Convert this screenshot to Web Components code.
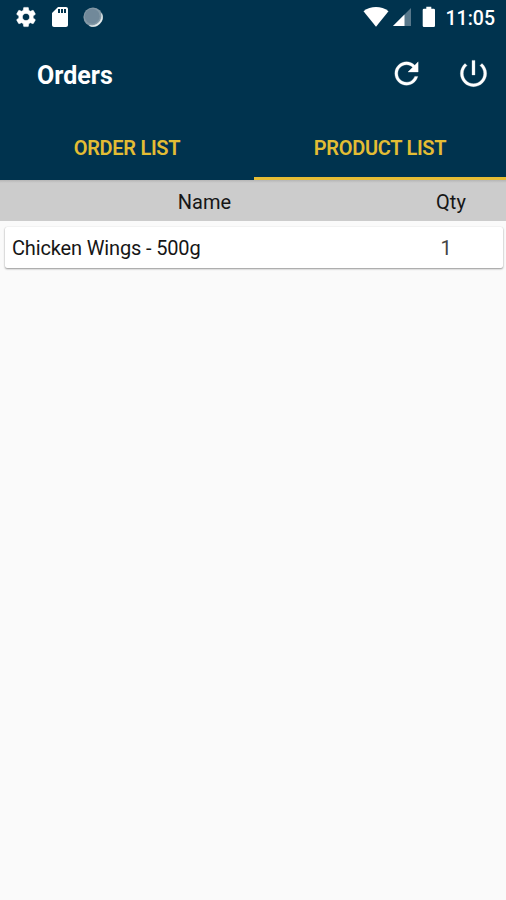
<!DOCTYPE html>
<html lang="en">
<head>
<meta charset="utf-8">
<title>Orders</title>
<style>
html,body{margin:0;height:100%}
body{background:#fafafa;font-family:Roboto,"Liberation Sans",sans-serif;overflow:hidden}
</style>
</head>
<body>
<orders-app></orders-app>
<script>
function define(name, html) {
  const template = document.createElement('template');
  template.innerHTML = html;
  customElements.define(name, class extends HTMLElement {
    constructor() {
      super();
      this.attachShadow({ mode: 'open' }).append(template.content.cloneNode(true));
    }
  });
}

define('status-bar', `
<style>
:host{display:flex;align-items:center;justify-content:space-between;height:36px;padding:0 11px 0 14px;box-sizing:border-box;color:#fff}
div{display:flex;align-items:center}
svg{display:block;fill:#fff}
.left{gap:9.500px;margin-top:-2px}
.right svg{margin-top:-2px}
time{font-size:19.500px;font-weight:500;line-height:36px;margin-left:10px;padding-top:1px}
</style>
<div class="left">
<svg width="24" height="24" viewBox="0 0 24 24"><path stroke="#fff" stroke-width=".5" d="M19.140 12.940c.04-.3.06-.61.06-.94 0-.32-.02-.64-.07-.94l2.030-1.580c.18-.14.23-.41.12-.61l-1.920-3.320c-.12-.22-.37-.29-.59-.22l-2.390.96c-.5-.38-1.030-.7-1.620-.94l-.36-2.540c-.04-.24-.24-.41-.48-.41h-3.840c-.24 0-.43.17-.47.41l-.36 2.540c-.59.24-1.130.57-1.620.94l-2.390-.96c-.22-.08-.47 0-.59.22L2.740 8.870c-.12.21-.08.47.12.61l2.030 1.580c-.05.3-.09.63-.09.94s.02.64.07.94l-2.030 1.580c-.18.14-.23.41-.12.61l1.920 3.320c.12.22.37.29.59.22l2.390-.96c.5.38 1.030.7 1.620.94l.36 2.540c.05.24.24.41.48.41h3.840c.24 0 .44-.17.47-.41l.36-2.540c.59-.24 1.130-.56 1.620-.94l2.390.96c.22.08.47 0 .59-.22l1.920-3.320c.12-.22.07-.47-.12-.61l-2.010-1.580zM12 15.600c-1.980 0-3.600-1.620-3.600-3.600s1.620-3.600 3.600-3.600 3.600 1.620 3.600 3.600-1.620 3.600-3.600 3.600z"/></svg>
<svg width="24" height="24" viewBox="0 0 24 24"><path d="M18 2h-8L4.020 8 4 20c0 1.100.9 2 2 2h12c1.100 0 2-.9 2-2V4c0-1.100-.9-2-2-2zm-6 6h-2V4h2v4zm3 0h-2V4h2v4zm3 0h-2V4h2v4z"/></svg>
<svg width="24" height="24" viewBox="0 0 24 24"><circle cx="12" cy="12" r="9.600" fill="#8499a6"/><circle cx="11.200" cy="11.200" r="7.500" fill="#71899a"/><path d="M20.700 8.500A9.300 9.300 0 0 1 8.500 20.700 10.600 10.600 0 0 0 20.700 8.500Z" fill="#e8eeee" stroke="#e8eeee" stroke-width=".6"/></svg>
</div>
<div class="right">
<svg width="26" height="22" viewBox="0 0 26 22"><path d="M.5 5.200C7.700-.4 18.300-.4 25.500 5.200L13 20.700Z"/></svg>
<svg width="20" height="22" viewBox="0 0 20 22" style="margin-left:3px"><path d="M19 2V20H1Z" fill="#58788b"/><path d="M12.500 8.500V20H1Z"/></svg>
<svg width="14" height="22" viewBox="0 0 14 22" style="margin-left:10px"><path d="M4.300.7h5v2.100h2.400q1.300 0 1.300 1.300v15.600q0 1.300-1.300 1.300H2q-1.300 0-1.300-1.300V4.100Q.7 2.800 2 2.800h2.300Z"/></svg>
<time>11:05</time>
</div>`);

define('app-bar', `
<style>
:host{display:flex;align-items:center;height:78px;padding:0 15.500px 0 37px;box-sizing:border-box;color:#fff}
h1{margin:1px 0 0;flex:1;font-size:25px;font-weight:700;line-height:30px}
nav{display:flex;gap:32px;margin-top:-3px}
svg{display:block;fill:#fff;stroke:#fff;stroke-width:.2}
</style>
<h1><slot></slot></h1>
<nav>
<svg width="35" height="35" viewBox="0 0 24 24"><path d="M17.650 6.350C16.200 4.900 14.210 4 12 4c-4.420 0-7.990 3.580-7.990 8s3.570 8 7.990 8c3.730 0 6.840-2.550 7.730-6h-2.080c-.82 2.330-3.040 4-5.650 4-3.310 0-6-2.690-6-6s2.690-6 6-6c1.660 0 3.140.69 4.220 1.780L13 11h7V4l-2.350 2.350z"/></svg>
<svg width="35" height="35" viewBox="0 0 24 24"><path d="M13 3h-2v10h2V3zm4.830 2.170l-1.420 1.420C17.990 7.860 19 9.810 19 12c0 3.870-3.130 7-7 7s-7-3.130-7-7c0-2.190 1.010-4.140 2.580-5.420L6.170 5.170C4.230 6.820 3 9.260 3 12c0 4.970 4.030 9 9 9s9-4.030 9-9c0-2.740-1.230-5.180-3.170-6.830z"/></svg>
</nav>`);

define('tab-item', `
<style>
:host{display:block;box-sizing:border-box;text-align:center;color:#e3bd34;font-size:20px;font-weight:600;letter-spacing:-.3px;line-height:68px;height:66px}
:host([active]){border-bottom:3px solid #e6bd35}
</style><slot></slot>`);

define('tab-bar', `<style>:host{display:grid;grid-template-columns:254px 252px;height:66px}</style><slot></slot>`);

define('table-head', `
<style>
:host{display:grid;grid-template-columns:409px 84px;height:41px;line-height:44px;background:linear-gradient(#b5b5b5,#ccc 3px);text-align:center;font-size:20px;color:#161616}
</style><slot></slot>`);

define('product-row', `
<style>
:host{display:grid;grid-template-columns:389px 90px;margin:6px 3px 0 5px;height:41px;line-height:43px;padding-left:7px;box-sizing:border-box;background:#fff;border-radius:2px;box-shadow:0 1px 2px #0006,0 0 1px #0002;font-size:20px;letter-spacing:-.15px;color:#161616}
.qty{text-align:center;color:#444}
</style><span><slot></slot></span><span class="qty"><slot name="qty"></slot></span>`);

define('orders-app', `
<style>
:host{display:block;height:900px;background:#fafafa}
header{background:#00334e}
</style>
<header>
<status-bar></status-bar>
<app-bar>Orders</app-bar>
<tab-bar><tab-item>ORDER LIST</tab-item><tab-item active>PRODUCT LIST</tab-item></tab-bar>
</header>
<table-head><span>Name</span><span>Qty</span></table-head>
<product-row>Chicken Wings - 500g<span slot="qty">1</span></product-row>`);
</script>
</body>
</html>
